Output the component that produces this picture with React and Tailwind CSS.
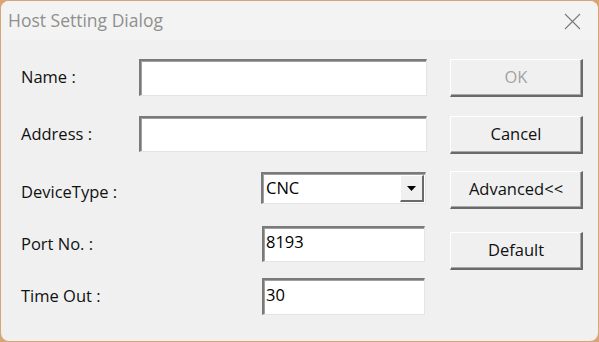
export default function App() {
  const font = { fontFamily: '"Open Sans", "Noto Sans", sans-serif' };
  const btn =
    "w-[133px] h-[38px] flex items-center justify-center bg-[#f0f0f0] border-t border-l border-t-white border-l-white border-b-2 border-r-2 border-b-[#6a6a6a] border-r-[#6a6a6a] shadow-[inset_-1px_-1px_0_#a8a8a8] text-[16.5px]";
  const input =
    "bg-white border-t-2 border-l-2 border-t-[#7a7a7a] border-l-[#7a7a7a] border-b border-r border-b-[#e4e4e4] border-r-[#e4e4e4] shadow-[inset_1px_1px_0_#a0a0a0] text-[16.5px] text-black flex items-center pl-[1px]";
  return (
    <div className="w-[599px] h-[342px] bg-[#d7a674] p-px" style={font}>
      <div className="w-full h-full rounded-[8px] bg-[#f0f0f0] overflow-hidden flex flex-col">
        <div className="h-[39px] bg-[#f3f3f3] flex items-center justify-between pl-[7px] pr-[17px] shrink-0">
          <span className="text-[17.5px] text-[#8f8f8f]">Host Setting Dialog</span>
          <svg width="17" height="17" viewBox="0 0 17 17" className="mt-px">
            <path d="M1 1L16 16M16 1L1 16" stroke="#7a7a7a" strokeWidth="1.1" />
          </svg>
        </div>
        <div className="flex flex-1">
          <div className="flex-1 pl-[20px] text-[16.5px] text-[#111]">
            <div className="flex items-center h-[37px] mt-[19px]">
              <span className="w-[118px]">Name :</span>
              <div className={input + " w-[288px] h-[37px]"} />
            </div>
            <div className="flex items-center h-[36px] mt-[20px]">
              <span className="w-[118px]">Address :</span>
              <div className={input + " w-[288px] h-[36px]"} />
            </div>
            <div className="flex items-center h-[32px] mt-[20px]">
              <span className="w-[240px] mt-[8px]">DeviceType :</span>
              <div className={input + " w-[165px] h-[32px] pr-[1px] justify-between"}>
                <span className="pl-[2px]">CNC</span>
                <div className="w-[24px] h-[27px] bg-[#f0f0f0] border-t border-l border-t-white border-l-white border-b-2 border-r-2 border-b-[#6a6a6a] border-r-[#6a6a6a] flex items-center justify-center">
                  <svg width="9" height="5" viewBox="0 0 9 5">
                    <path d="M0 0H9L4.5 5Z" fill="#000" />
                  </svg>
                </div>
              </div>
            </div>
            <div className="flex items-center h-[36px] mt-[22px]">
              <span className="w-[241px]">Port No. :</span>
              <div className={input + " w-[163px] h-[36px] items-start pt-[2px]"}>
                <span className="pl-[1px]">8193</span>
              </div>
            </div>
            <div className="flex items-center h-[37px] mt-[16px]">
              <span className="w-[241px]">Time Out :</span>
              <div className={input + " w-[163px] h-[37px] items-start pt-[3px]"}>
                <span className="pl-[1px]">30</span>
              </div>
            </div>
          </div>
          <div className="w-[133px] mr-[15px] flex flex-col">
            <div className={btn + " mt-[19px] text-[#a3a3a3]"}>OK</div>
            <div className={btn + " mt-[19px] text-[#111]"}>Cancel</div>
            <div className={btn + " mt-[17px] text-[#111]"}>Advanced&lt;&lt;</div>
            <div className={btn + " mt-[23px] text-[#111]"}>Default</div>
          </div>
        </div>
      </div>
    </div>
  );
}
